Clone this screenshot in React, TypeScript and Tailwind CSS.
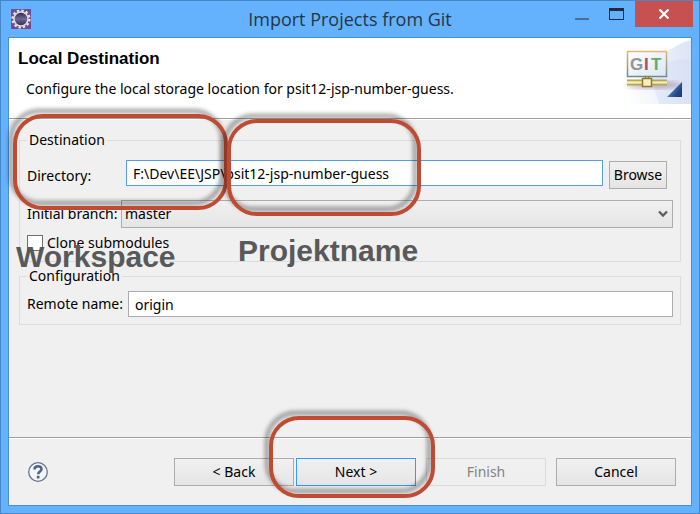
import type { ReactNode } from "react";

function EclipseIcon() {
  return (
    <svg width="20" height="20" viewBox="0 0 20 20" aria-hidden="true" className="shrink-0">
      <defs>
        <linearGradient id="gearBack" x1="0" y1="0" x2="1" y2="1">
          <stop offset="0" stopColor="#67549b" />
          <stop offset="1" stopColor="#72468f" />
        </linearGradient>
        <linearGradient id="gearCore" x1="0" y1="0" x2="0" y2="1">
          <stop offset="0" stopColor="#2c2150" />
          <stop offset="0.5" stopColor="#6c6a94" />
          <stop offset="1" stopColor="#34245a" />
        </linearGradient>
      </defs>
      <rect width="20" height="20" fill="url(#gearBack)" />
      <circle cx="10" cy="10" r="8.3" fill="none" stroke="#e8e4dc" strokeWidth="2.6" strokeDasharray="2.4 1.95" />
      <circle cx="10" cy="10" r="7" fill="url(#gearCore)" stroke="#dcd8d4" strokeWidth="1.6" />
    </svg>
  );
}

function GitBanner() {
  return (
    <svg width="72" height="66" viewBox="0 0 72 66" role="img" aria-label="GIT" className="shrink-0">
      <defs>
        <linearGradient id="sky" x1="0" y1="0.6" x2="1" y2="0.4">
          <stop offset="0.05" stopColor="#ffffff" />
          <stop offset="1" stopColor="#dde5f7" />
        </linearGradient>
        <linearGradient id="frame" x1="0" y1="0" x2="0" y2="1">
          <stop offset="0" stopColor="#e2b57c" />
          <stop offset="1" stopColor="#6b8c94" />
        </linearGradient>
        <linearGradient id="board" x1="0" y1="0" x2="1" y2="1">
          <stop offset="0" stopColor="#ffffff" />
          <stop offset="1" stopColor="#dbe7ef" />
        </linearGradient>
        <linearGradient id="corner" x1="0" y1="0" x2="1" y2="0.6">
          <stop offset="0" stopColor="#9cc4e8" />
          <stop offset="0.55" stopColor="#3e6ba5" />
          <stop offset="1" stopColor="#173a7a" />
        </linearGradient>
        <filter id="soft">
          <feGaussianBlur stdDeviation="2.5" />
        </filter>
      </defs>
      <rect width="72" height="66" fill="url(#sky)" />
      <path d="M0 0H72V2C52 7 38 22 24 34C14 42 8 48 0 50Z" fill="#fff" />
      <path d="M30 32C46 24 56 21 72 21V66H40Z" fill="#cfd9f2" opacity="0.4" />
      <ellipse cx="35" cy="47" rx="28" ry="4" fill="#806080" opacity="0.4" filter="url(#soft)" />
      <g transform="translate(1 0)">
        <rect x="7.5" y="13.5" width="39" height="25" fill="url(#board)" stroke="url(#frame)" strokeWidth="1.5" />
        <g fontFamily="Liberation Sans, sans-serif" fontWeight="700" fontSize="17">
          <text x="10" y="32" fill="#949494">G</text>
          <text x="24" y="32" fill="#b94f54">I</text>
          <text x="31" y="32" fill="#64a96d">T</text>
        </g>
        <path d="M7 42.5H47M7 46.5H47" stroke="#b6a84c" strokeWidth="2" />
        <path d="M7 44.5H47" stroke="#f6efab" strokeWidth="2" />
        <path d="M25.5 38v3M28.5 38v3" stroke="#8d7a34" strokeWidth="1.5" />
        <rect x="22.5" y="40.5" width="9" height="8" fill="#fbeebd" stroke="#8f7632" strokeWidth="1.5" />
      </g>
      <path d="M48 59L63 44V59Z" fill="url(#corner)" />
      <path d="M53 58L62 50V58Z" fill="#23477f" opacity="0.6" />
    </svg>
  );
}

function PushButton({
  children,
  look = "border-[#acacac] text-black",
  disabled = false,
}: {
  children: ReactNode;
  look?: string;
  disabled?: boolean;
}) {
  return (
    <button
      type="button"
      disabled={disabled}
      className={`h-7 w-[120px] border bg-gradient-to-b from-[#f0f0f0] to-[#e5e5e5] leading-5 ${look}`}
    >
      {children}
    </button>
  );
}

function Ring({ place }: { place: string }) {
  return (
    <div
      aria-hidden="true"
      className={`pointer-events-none absolute rounded-[30px] border-4 border-[#c04b33] drop-shadow-[-4px_-5px_2px_rgba(0,0,0,0.4)] ${place}`}
    />
  );
}

export default function App() {
  return (
    <div className="relative flex min-h-screen flex-col border border-[#4787c5] bg-[#64b2fd] px-[7px] pb-[7px] font-['Noto_Sans','Open_Sans',sans-serif] text-sm text-black">
      <header className="relative flex h-9 items-center px-[3px]">
        <EclipseIcon />
        <h1 className="flex-1 pr-5 text-center font-['Open_Sans','Noto_Sans',sans-serif] text-lg leading-6 text-[#263645]">
          Import Projects from Git
        </h1>
        <div className="absolute top-0 -right-px flex h-[26px] items-stretch">
          <button type="button" aria-label="Minimize" className="flex w-[30px] items-end justify-center pb-[7px]">
            <span className="h-0.5 w-3.5 bg-[#44709b]" />
          </button>
          <button type="button" aria-label="Maximize" className="flex w-[38px] items-start justify-center pt-[7px]">
            <span className="h-3 w-[15px] border border-t-[3px] border-[#222b33]" />
          </button>
          <button type="button" aria-label="Close" className="flex w-[58px] items-center justify-center bg-[#c75050]">
            <svg width="12" height="10" viewBox="0 0 12 10" aria-hidden="true">
              <path d="M1.5 0.5L10.5 9.5M10.5 0.5L1.5 9.5" stroke="#fff" strokeWidth="2.2" />
            </svg>
          </button>
        </div>
      </header>

      <main className="flex flex-1 flex-col border border-[#4c90d2] bg-[#f0f0f0]">
        <section className="flex h-[81px] justify-between border-b border-[#a0a0a0] bg-white">
          <div className="pt-[9px] pl-[9px]">
            <h2 className="font-['Liberation_Sans',Arial,sans-serif] text-[17px] leading-6 font-bold">
              Local Destination
            </h2>
            <p className="pt-2 pl-2 leading-5">Configure the local storage location for psit12-jsp-number-guess.</p>
          </div>
          <GitBanner />
        </section>

        <form className="flex-1 border-t border-white px-2.5 pt-2.5">
          <fieldset className="border border-[#dcdcdc] px-[7px] pb-2">
            <legend className="px-0.5 leading-5">Destination</legend>
            <div className="flex items-start pt-2.5 pr-1.5">
              <label htmlFor="directory" className="w-[99px] pt-1.5 leading-5">
                Directory:
              </label>
              <input
                id="directory"
                defaultValue="F:\Dev\EE\JSP\psit12-jsp-number-guess"
                className="mr-1.5 h-[26px] min-w-0 flex-1 border border-[#569de5] bg-white px-1.5 outline-none"
              />
              <button
                type="button"
                className="mt-px h-7 w-[58px] border border-[#acacac] bg-gradient-to-b from-[#f0f0f0] to-[#e5e5e5] leading-5"
              >
                Browse
              </button>
            </div>
            <div className="flex items-center pt-[11px]">
              <label htmlFor="branch" className="w-[94px] leading-5 whitespace-nowrap">
                Initial branch:
              </label>
              <div className="relative flex-1">
                <select
                  id="branch"
                  className="block h-7 w-full appearance-none border border-[#acacac] bg-gradient-to-b from-[#f0f0f0] to-[#e5e5e5] px-[3px]"
                >
                  <option>master</option>
                </select>
                <svg
                  width="10"
                  height="8"
                  viewBox="0 0 10 8"
                  aria-hidden="true"
                  className="pointer-events-none absolute top-2.5 right-[5px]"
                >
                  <path d="M1 1.5L5 5.5L9 1.5" fill="none" stroke="#606060" strokeWidth="2.4" />
                </svg>
              </div>
            </div>
            <div className="flex items-center gap-1 pt-[5px]">
              <input
                id="submodules"
                type="checkbox"
                className="size-4 appearance-none border border-[#707070] bg-white"
              />
              <label htmlFor="submodules" className="leading-5">
                Clone submodules
              </label>
            </div>
          </fieldset>

          <fieldset className="mt-1 border border-[#dcdcdc] px-[7px] pb-[7px]">
            <legend className="px-0.5 leading-5">Configuration</legend>
            <div className="flex items-center pt-[5px]">
              <label htmlFor="remote" className="w-[101px] leading-5 whitespace-nowrap">
                Remote name:
              </label>
              <input
                id="remote"
                defaultValue="origin"
                className="h-[26px] min-w-0 flex-1 border border-[#abadb3] bg-white px-1.5 outline-none"
              />
            </div>
          </fieldset>
        </form>

        <footer className="flex h-[68px] items-center border-t border-[#a0a0a0] pr-[15px] pl-[18px] shadow-[inset_0_1px_0_#ffffff]">
          <button type="button" aria-label="Help" className="mr-auto">
            <svg width="22" height="22" viewBox="0 0 22 22" aria-hidden="true">
              <circle cx="11" cy="11" r="9.3" fill="#f4f6fa" stroke="#66758f" strokeWidth="1.3" />
              <path
                d="M7.5 8.5C7.5 4.2 14.5 4.2 14.5 8C14.5 10.5 11.2 10.3 11.2 13.2"
                fill="none"
                stroke="#50618a"
                strokeWidth="2.5"
              />
              <rect x="9.8" y="14.8" width="2.7" height="2.7" fill="#50618a" />
            </svg>
          </button>
          <div className="flex gap-2.5">
            <div className="flex gap-0.5">
              <PushButton>&lt; Back</PushButton>
              <PushButton look="border-[#3399ff] text-black">Next &gt;</PushButton>
            </div>
            <PushButton disabled look="border-[#d9d9d9] text-[#838383] from-[#efefef] to-[#efefef]">
              Finish
            </PushButton>
            <PushButton>Cancel</PushButton>
          </div>
        </footer>
      </main>

      <Ring place="top-[113px] left-[12px] h-[96px] w-[215px]" />
      <Ring place="top-[118px] left-[226px] h-[97px] w-[194px]" />
      <Ring place="top-[415px] left-[268px] h-[82px] w-[166px]" />
      <span className="pointer-events-none absolute top-[241px] left-[15px] font-['Liberation_Sans',Arial,sans-serif] text-3xl leading-[30px] font-bold text-[#595959]">
        Workspace
      </span>
      <span className="pointer-events-none absolute top-[235px] left-[237px] font-['Liberation_Sans',Arial,sans-serif] text-3xl leading-[30px] font-bold text-[#595959]">
        Projektname
      </span>
    </div>
  );
}
